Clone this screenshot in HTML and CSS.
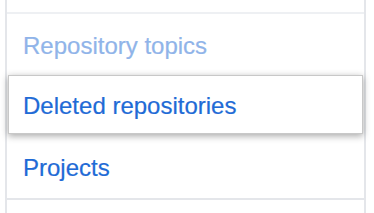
FILE: index.html
```html
<!DOCTYPE html>
<html lang="en">
<head>
    <meta charset="UTF-8">
    <meta name="viewport" content="width=device-width, initial-scale=1.0">
    <title>Settings menu</title>
    <link rel="stylesheet" href="styles.css">
</head>
<body>
    <nav class="menu">
        <div class="menu-stub menu-stub-top"></div>
        <a class="menu-item menu-item-faded" href="#">Repository topics</a>
        <a class="menu-item menu-item-selected" href="#">Deleted repositories</a>
        <a class="menu-item menu-item-last" href="#">Projects</a>
        <div class="menu-stub"></div>
    </nav>
</body>
</html>
```

FILE: styles.css
```css
body {
    margin: 0;
    background-color: #fff;
    font-family: "Liberation Sans", Arial, sans-serif;
}

.menu {
    margin-left: 5px;
    width: 361px;
    box-sizing: border-box;
    border-left: 2px solid #e4e6ea;
    border-right: 2px solid #e4e6ea;
}

.menu-stub {
    height: 13px;
}

.menu-stub-top {
    height: 12px;
    border-bottom: 2px solid #eef0f3;
}

.menu-item {
    display: flex;
    align-items: center;
    box-sizing: border-box;
    height: 61px;
    padding-left: 16px;
    font-size: 24px;
    color: #1f6bd6;
    text-decoration: none;
    -webkit-text-stroke: 0.2px currentColor;
}

.menu-item-faded {
    color: #90b4e9;
    padding-top: 2px;
}

.menu-item-selected {
    position: relative;
    height: 59px;
    margin: 0 1px;
    padding-left: 14px;
    padding-top: 2px;
    background-color: #fff;
    border: 1px solid #c8c8c8;
    box-shadow: 0 2px 7px rgba(0, 0, 0, 0.35);
}

.menu-item-last {
    height: 66px;
    padding-top: 4px;
    border-bottom: 2px solid #e4e6ea;
}
```
